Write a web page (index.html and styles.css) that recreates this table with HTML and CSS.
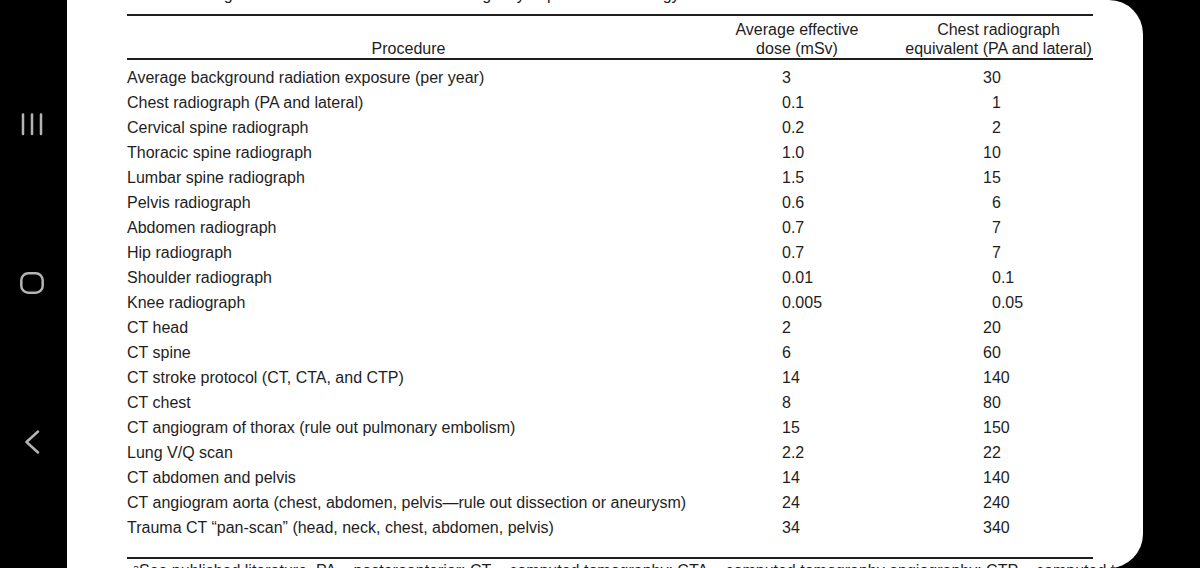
FILE: index.html
```html
<!DOCTYPE html>
<html lang="en">
<head>
<meta charset="utf-8">
<title>Average effective doses</title>
<link rel="stylesheet" href="styles.css">
</head>
<body>
<div class="screen">
  <nav class="navbar">
    <svg class="nav-icon" width="24" height="24" viewBox="0 0 24 24" aria-label="Recent apps">
      <line x1="3" y1="2.5" x2="3" y2="22" />
      <line x1="12" y1="2.5" x2="12" y2="22" />
      <line x1="21" y1="2.5" x2="21" y2="22" />
    </svg>
    <svg class="nav-icon" width="24" height="24" viewBox="0 0 24 24" aria-label="Home">
      <rect x="1.3" y="2.3" width="21.4" height="19.4" rx="7" ry="7" />
    </svg>
    <svg class="nav-icon" width="24" height="24" viewBox="0 0 24 24" aria-label="Back">
      <polyline points="18,1.5 6.5,12 18,22.5" />
    </svg>
  </nav>
  <main class="page">
    <p class="caption">Table 1 Average effective doses for common emergency department radiology studies</p>
    <table class="doses">
      <colgroup>
        <col class="col-proc">
        <col class="col-dose">
        <col class="col-equiv">
      </colgroup>
      <thead>
        <tr>
          <th class="h-proc">Procedure</th>
          <th>Average effective<br>dose (mSv)</th>
          <th>Chest radiograph<br>equivalent (PA and lateral)</th>
        </tr>
      </thead>
      <tbody>
        <tr><td>Average background radiation exposure (per year)</td><td class="dose">3</td><td class="equiv">30</td></tr>
        <tr><td>Chest radiograph (PA and lateral)</td><td class="dose">0.1</td><td class="equiv ind">1</td></tr>
        <tr><td>Cervical spine radiograph</td><td class="dose">0.2</td><td class="equiv ind">2</td></tr>
        <tr><td>Thoracic spine radiograph</td><td class="dose">1.0</td><td class="equiv">10</td></tr>
        <tr><td>Lumbar spine radiograph</td><td class="dose">1.5</td><td class="equiv">15</td></tr>
        <tr><td>Pelvis radiograph</td><td class="dose">0.6</td><td class="equiv ind">6</td></tr>
        <tr><td>Abdomen radiograph</td><td class="dose">0.7</td><td class="equiv ind">7</td></tr>
        <tr><td>Hip radiograph</td><td class="dose">0.7</td><td class="equiv ind">7</td></tr>
        <tr><td>Shoulder radiograph</td><td class="dose">0.01</td><td class="equiv ind">0.1</td></tr>
        <tr><td>Knee radiograph</td><td class="dose">0.005</td><td class="equiv ind">0.05</td></tr>
        <tr><td>CT head</td><td class="dose">2</td><td class="equiv">20</td></tr>
        <tr><td>CT spine</td><td class="dose">6</td><td class="equiv">60</td></tr>
        <tr><td>CT stroke protocol (CT, CTA, and CTP)</td><td class="dose">14</td><td class="equiv">140</td></tr>
        <tr><td>CT chest</td><td class="dose">8</td><td class="equiv">80</td></tr>
        <tr><td>CT angiogram of thorax (rule out pulmonary embolism)</td><td class="dose">15</td><td class="equiv">150</td></tr>
        <tr><td>Lung V/Q scan</td><td class="dose">2.2</td><td class="equiv">22</td></tr>
        <tr><td>CT abdomen and pelvis</td><td class="dose">14</td><td class="equiv">140</td></tr>
        <tr><td>CT angiogram aorta (chest, abdomen, pelvis—rule out dissection or aneurysm)</td><td class="dose">24</td><td class="equiv">240</td></tr>
        <tr><td>Trauma CT “pan-scan” (head, neck, chest, abdomen, pelvis)</td><td class="dose">34</td><td class="equiv">340</td></tr>
      </tbody>
    </table>
    <p class="footnote">ᵃSee published literature. PA = posteroanterior; CT = computed tomography; CTA = computed tomography angiography; CTP = computed tomography perfusion.</p>
  </main>
  <div class="edge"></div>
</div>
</body>
</html>
```

FILE: styles.css
```css
html, body {
  margin: 0;
  padding: 0;
  background: #000;
}

.screen {
  display: flex;
  width: 1200px;
  height: 568px;
  overflow: hidden;
  background: #000;
}

.navbar {
  flex: 0 0 67px;
  box-sizing: border-box;
  padding: 0 4px 3px 0;
  display: flex;
  flex-direction: column;
  align-items: center;
  justify-content: center;
  gap: 135px;
  background: #000;
}

.nav-icon {
  display: block;
  fill: none;
  stroke: #b4b4b4;
  stroke-width: 2.5;
  stroke-linecap: round;
  stroke-linejoin: round;
}

.page {
  flex: 0 0 1076px;
  box-sizing: border-box;
  height: 568px;
  overflow: hidden;
  background: #fff;
  border-radius: 0 34px 34px 0;
  padding-left: 60px;
  font-family: "Liberation Sans", Arial, sans-serif;
  font-size: 16px;
  color: #1e1e1e;
}

.caption {
  margin: -14px 0 0;
  line-height: 18px;
  white-space: nowrap;
}

.doses {
  margin-top: 10px;
  width: 966px;
  table-layout: fixed;
  border-collapse: collapse;
  border-top: 2px solid #1e1e1e;
  border-bottom: 2px solid #1e1e1e;
}

.col-proc { width: 563px; }
.col-dose { width: 214px; }
.col-equiv { width: 189px; }

.doses thead th {
  font-weight: normal;
  text-align: center;
  vertical-align: bottom;
  line-height: 19px;
  padding: 4px 0 0;
  height: 38px;
  white-space: nowrap;
  border-bottom: 2px solid #1e1e1e;
}

.doses td {
  padding: 0;
  line-height: 25px;
  white-space: nowrap;
  vertical-align: top;
}

.doses tbody tr:first-child td {
  padding-top: 5px;
}

.doses tbody tr:last-child td {
  padding-bottom: 17px;
}

.doses td.dose {
  padding-left: 92px;
}

.doses td.equiv {
  padding-left: 79px;
}

.doses td.equiv.ind {
  padding-left: 88px;
}

.footnote {
  margin: 3px 0 0 6px;
  line-height: 18px;
  white-space: nowrap;
}

.edge {
  flex: 1 1 auto;
  background: #000;
}
```
